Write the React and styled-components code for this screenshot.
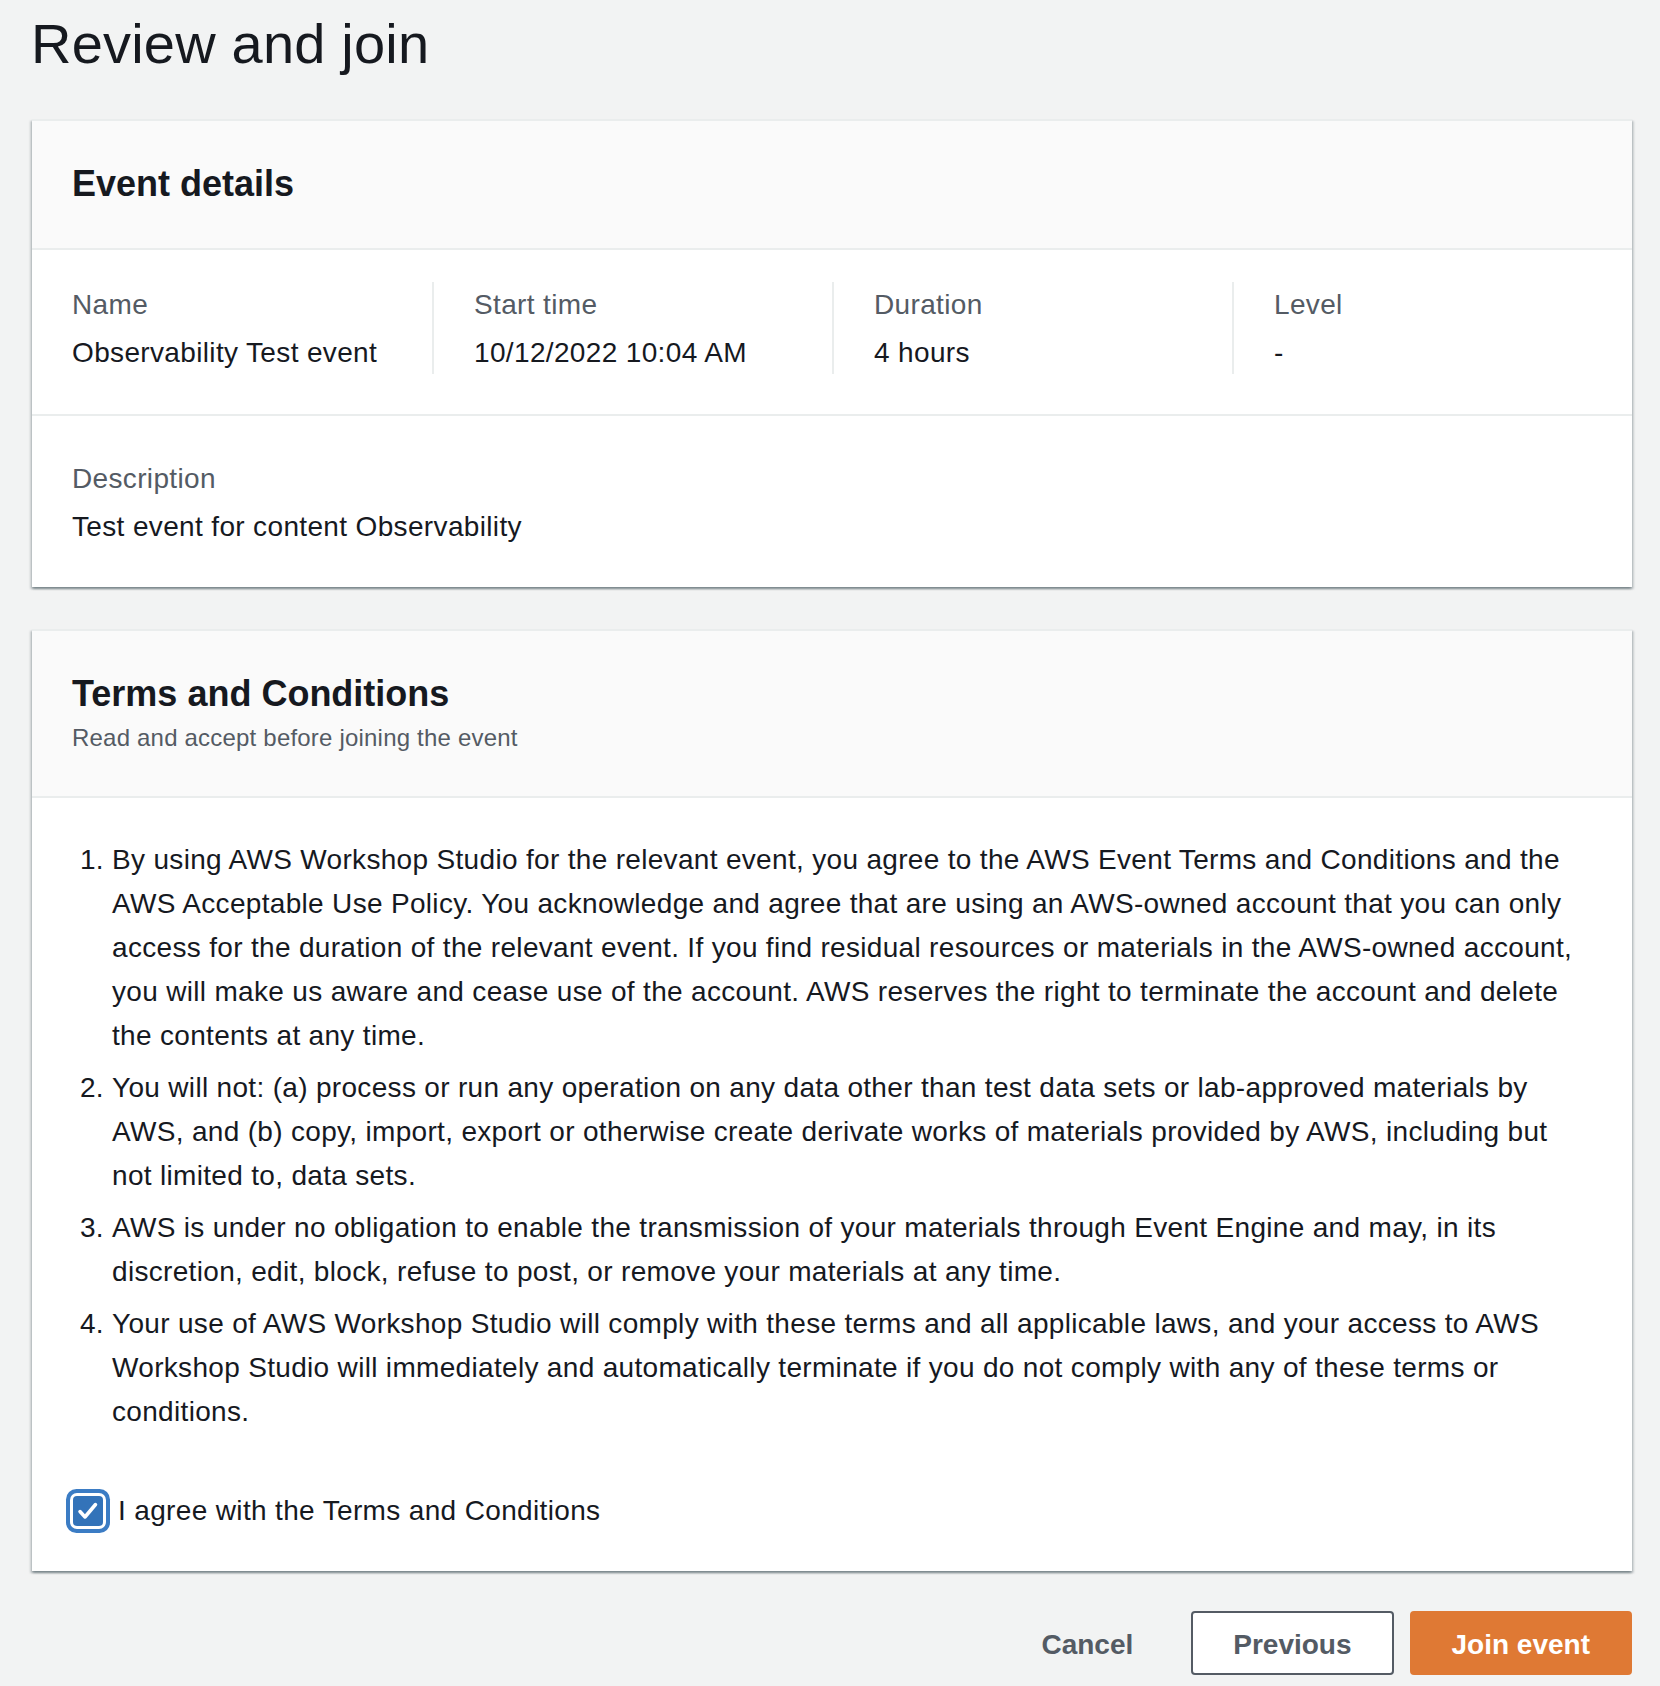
import React from 'react';
import styled, { createGlobalStyle } from 'styled-components';

const GlobalStyle = createGlobalStyle`
  html, body {
    margin: 0;
    padding: 0;
    background: #f2f3f3;
  }
  body {
    font-family: "Liberation Sans", Arial, sans-serif;
    color: #16191f;
  }
`;

const Page = styled.div`
  padding: 8px 28px 11px 32px;
`;

const Title = styled.h1`
  margin: 0 0 39px -1px;
  font-size: 56px;
  line-height: 72px;
  font-weight: 400;
  letter-spacing: 0.2px;
  color: #16191f;
`;

const Card = styled.section`
  background: #fff;
  border-top: 2px solid #eaeded;
  box-shadow: 0 2px 2px 0 rgba(0, 28, 36, 0.3), 2px 2px 2px 0 rgba(0, 28, 36, 0.15),
    -2px 2px 2px 0 rgba(0, 28, 36, 0.15);
  margin-bottom: ${(p) => p.$gap || 0}px;
`;

const CardHeader = styled.header`
  background: #fafafa;
  padding: 41px 40px 42px;
  border-bottom: 2px solid #eaeded;
`;

const CardTitle = styled.h2`
  margin: 0;
  font-size: 36px;
  line-height: 44px;
  font-weight: 700;
  color: #16191f;
`;

const CardDesc = styled.p`
  margin: 6px 0 0;
  font-size: 24px;
  line-height: 32px;
  letter-spacing: 0.2px;
  color: #545b64;
`;

const Section = styled.div`
  padding: ${(p) => p.$pad};
  border-bottom: ${(p) => (p.$divider ? '2px solid #eaeded' : 'none')};
`;

const Columns = styled.div`
  display: grid;
  grid-template-columns: repeat(4, 1fr);
`;

const Column = styled.div`
  padding-left: 40px;
  & + & {
    border-left: 2px solid #eaeded;
  }
`;

const Label = styled.div`
  font-size: 28px;
  line-height: 42px;
  padding-top: 2px;
  letter-spacing: 0.35px;
  color: #545b64;
  margin-bottom: 4px;
`;

const Value = styled.div`
  font-size: 28px;
  line-height: 42px;
  padding-top: 2px;
  letter-spacing: 0.35px;
  color: #16191f;
`;

const Terms = styled.ol`
  margin: 0;
  padding: 2px 0 0 40px;
  font-size: 28px;
  line-height: 44px;
  letter-spacing: 0.32px;
  color: #16191f;

  li + li {
    margin-top: 8px;
  }
`;

const CheckRow = styled.label`
  display: flex;
  align-items: center;
  gap: 15px;
  margin-top: 55px;
  font-size: 28px;
  line-height: 44px;
  letter-spacing: 0.35px;
  color: #16191f;
`;

const Box = styled.span`
  width: 30px;
  height: 30px;
  margin-left: 1px;
  border-radius: 4px;
  background: #3373b9;
  display: flex;
  align-items: center;
  justify-content: center;
  box-shadow: 0 0 0 3px #fff, 0 0 0 7px #3b7cc4;
  flex-shrink: 0;
`;

const Actions = styled.div`
  display: flex;
  justify-content: flex-end;
  gap: 16px;
  margin-top: 40px;
`;

const Button = styled.button`
  font-family: "Liberation Sans", Arial, sans-serif;
  font-size: 28px;
  line-height: 44px;
  font-weight: 700;
  padding: 10px 40px 6px;
  border-radius: 4px;
  border: 2px solid ${(p) => (p.$variant === 'normal' ? '#545b64' : p.$variant === 'primary' ? '#df7934' : 'transparent')};
  background: ${(p) => (p.$variant === 'normal' ? '#fff' : p.$variant === 'primary' ? '#df7934' : 'transparent')};
  color: ${(p) => (p.$variant === 'primary' ? '#fff' : '#545b64')};
  cursor: pointer;
`;

const terms = [
  'By using AWS Workshop Studio for the relevant event, you agree to the AWS Event Terms and Conditions and the AWS Acceptable Use Policy. You acknowledge and agree that are using an AWS-owned account that you can only access for the duration of the relevant event. If you find residual resources or materials in the AWS-owned account, you will make us aware and cease use of the account. AWS reserves the right to terminate the account and delete the contents at any time.',
  'You will not: (a) process or run any operation on any data other than test data sets or lab-approved materials by AWS, and (b) copy, import, export or otherwise create derivate works of materials provided by AWS, including but not limited to, data sets.',
  'AWS is under no obligation to enable the transmission of your materials through Event Engine and may, in its discretion, edit, block, refuse to post, or remove your materials at any time.',
  'Your use of AWS Workshop Studio will comply with these terms and all applicable laws, and your access to AWS Workshop Studio will immediately and automatically terminate if you do not comply with any of these terms or conditions.',
];

const details = [
  { label: 'Name', value: 'Observability Test event' },
  { label: 'Start time', value: '10/12/2022 10:04 AM' },
  { label: 'Duration', value: '4 hours' },
  { label: 'Level', value: '-' },
];

const App = () => {
  return (
    <Page>
      <GlobalStyle />
      <Title>Review and join</Title>

      <Card $gap={42}>
        <CardHeader>
          <CardTitle>Event details</CardTitle>
        </CardHeader>
        <Section $pad="32px 0 40px 0" $divider>
          <Columns>
            {details.map((d) => (
              <Column key={d.label}>
                <Label>{d.label}</Label>
                <Value>{d.value}</Value>
              </Column>
            ))}
          </Columns>
        </Section>
        <Section $pad="40px 40px 39px">
          <Label>Description</Label>
          <Value>Test event for content Observability</Value>
        </Section>
      </Card>

      <Card>
        <CardHeader>
          <CardTitle>Terms and Conditions</CardTitle>
          <CardDesc>Read and accept before joining the event</CardDesc>
        </CardHeader>
        <Section $pad="38px 40px 38px">
          <Terms>
            {terms.map((t, i) => (
              <li key={i}>{t}</li>
            ))}
          </Terms>
          <CheckRow>
            <Box>
              <svg width="24" height="24" viewBox="0 0 24 24" fill="none">
                <path d="M4 12.5l5 5.5L19.5 5.5" stroke="#fff" strokeWidth="3.5" strokeLinecap="round" strokeLinejoin="round" />
              </svg>
            </Box>
            I agree with the Terms and Conditions
          </CheckRow>
        </Section>
      </Card>

      <Actions>
        <Button $variant="link">Cancel</Button>
        <Button $variant="normal">Previous</Button>
        <Button $variant="primary">Join event</Button>
      </Actions>
    </Page>
  );
};

export default App;
